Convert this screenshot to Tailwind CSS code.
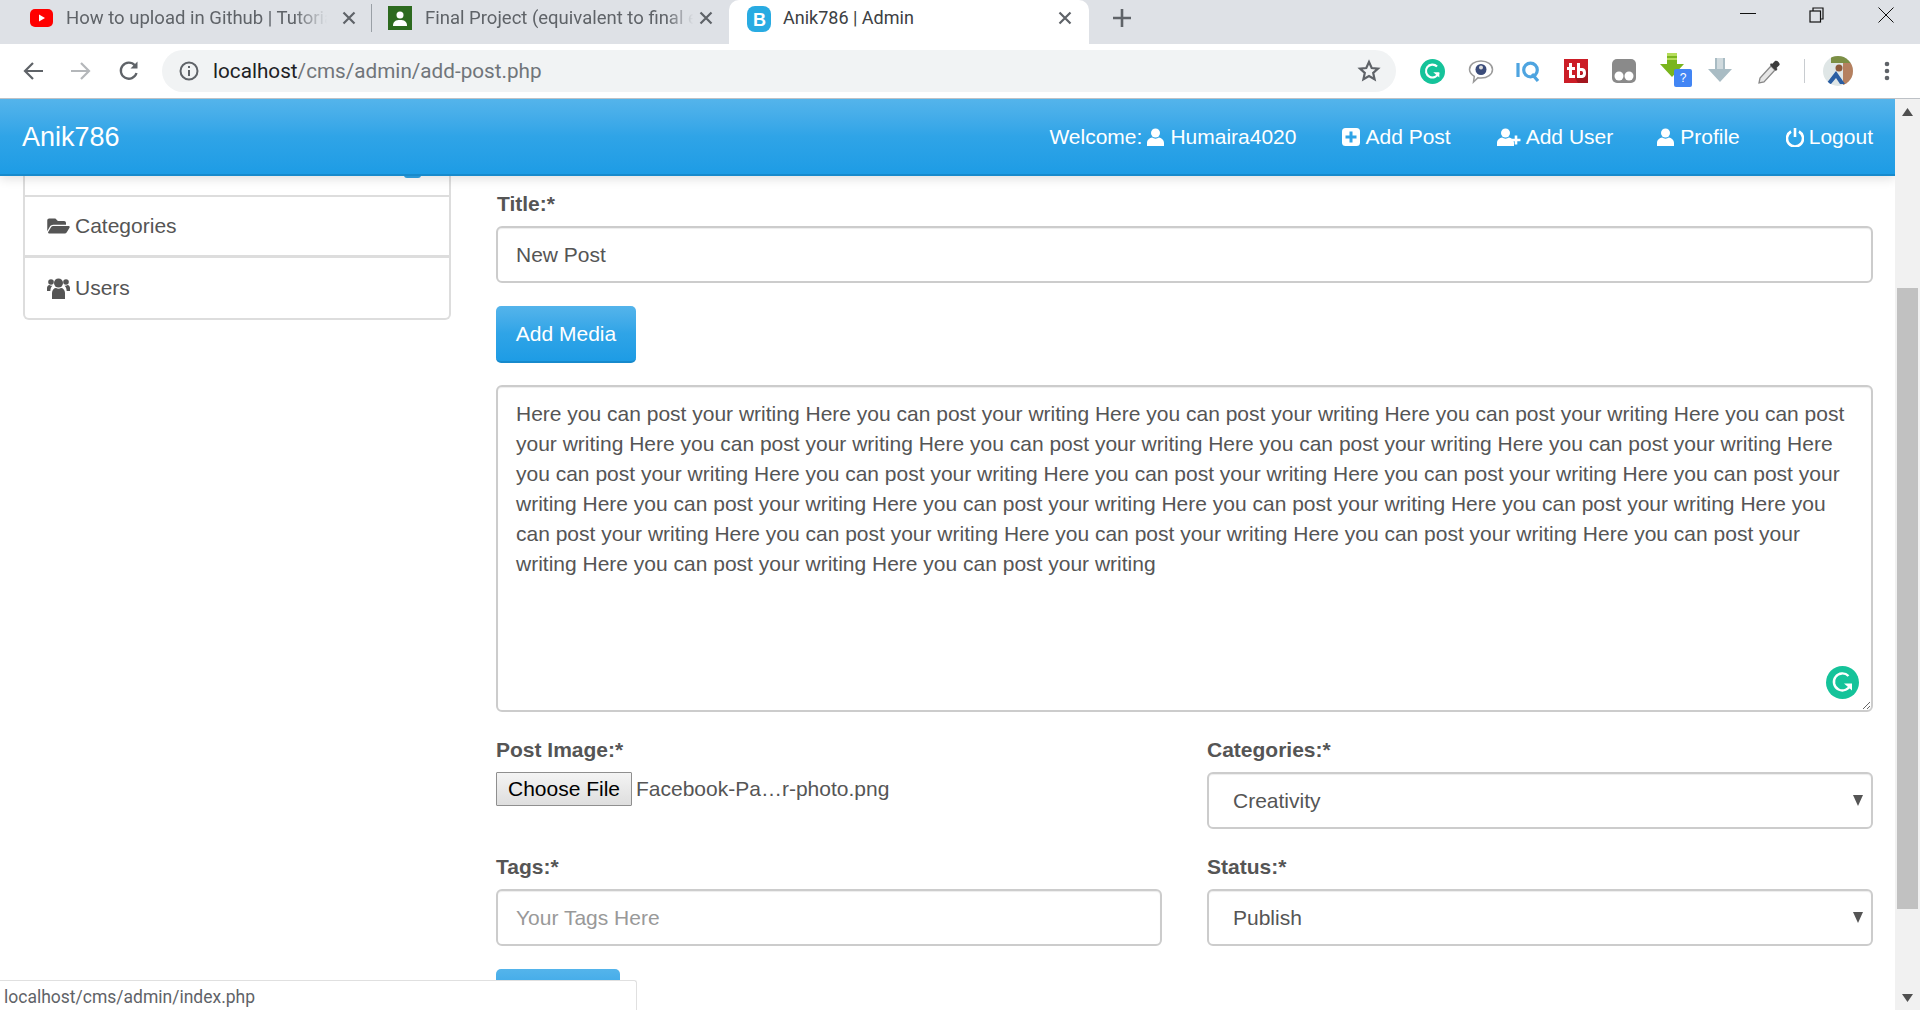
<!DOCTYPE html>
<html lang="en">
<head>
<meta charset="utf-8">
<title>Anik786 | Admin</title>
<script src="https://cdn.jsdelivr.net/npm/@tailwindcss/browser@4"></script>
</head>
<body class="w-[1920px] h-[1010px] overflow-hidden bg-white font-['Liberation_Sans',Arial,sans-serif] text-[#555] relative">

<!-- Tab strip -->
<div class="h-[44px] bg-[#dee1e6] flex items-start font-['Roboto',sans-serif] text-[18.5px] text-[#5f6368]">
  <div class="w-[371px] h-[36px] flex items-center pl-[30px] shrink-0">
    <svg class="w-[23px] h-[18px] shrink-0" viewBox="0 0 23 18"><rect width="23" height="18" rx="5" fill="#f00"/><path d="M9 5.5l6 3.500-6 3.500z" fill="#fff"/></svg>
    <span class="ml-[13px] pt-[2px] w-[272px] whitespace-nowrap [mask-image:linear-gradient(to_right,black_84%,transparent_96%)]">How to upload in Github | Tutoria</span>
    <svg class="w-[14px] h-[14px] ml-[4px] shrink-0" viewBox="0 0 14 14" stroke="#5f6368" stroke-width="2.2"><path d="M1.5 1.5l11 11M12.5 1.5l-11 11"/></svg>
  </div>
  <div class="w-px h-[28px] mt-[4px] bg-[#9aa0a6] shrink-0"></div>
  <div class="w-[357px] h-[36px] flex items-center pl-[16px] shrink-0">
    <svg class="w-[24px] h-[24px] shrink-0" viewBox="0 0 24 24"><rect width="24" height="24" fill="#2d6a1f"/><circle cx="12" cy="9" r="3.5" fill="#fff"/><path d="M5 20c0-5 3-6 7-6s7 1 7 6z" fill="#fff"/></svg>
    <span class="ml-[13px] pt-[2px] w-[274px] whitespace-nowrap [mask-image:linear-gradient(to_right,black_88%,transparent_98%)]">Final Project (equivalent to final e</span>
    <svg class="w-[14px] h-[14px] shrink-0" viewBox="0 0 14 14" stroke="#5f6368" stroke-width="2.2"><path d="M1.5 1.5l11 11M12.5 1.5l-11 11"/></svg>
  </div>
  <div class="w-[360px] h-[44px] bg-white rounded-t-[10px] flex items-start pl-[18px] pt-[6px] shrink-0 text-[18px] text-[#3c4043]">
    <svg class="w-[24px] h-[26px] shrink-0" viewBox="0 0 24 26"><rect width="24" height="26" rx="8" fill="#29abe2"/><text x="6" y="20" font-size="18" font-weight="700" fill="#fff" font-family="Liberation Sans">B</text></svg>
    <span class="ml-[12px] w-[268px] leading-[24px] whitespace-nowrap">Anik786 | Admin</span>
    <svg class="w-[14px] h-[14px] ml-[7px] mt-[5px] shrink-0" viewBox="0 0 14 14" stroke="#5f6368" stroke-width="2.2"><path d="M1.5 1.5l11 11M12.5 1.5l-11 11"/></svg>
  </div>
  <svg class="w-[20px] h-[20px] ml-[23px] mt-[8px] shrink-0" viewBox="0 0 20 20" stroke="#5f6368" stroke-width="2.6"><path d="M10 1v18M1 10h18"/></svg>
  <div class="flex-1"></div>
  <svg class="w-[16px] h-[16px] mt-[6px] mr-[53px]" viewBox="0 0 16 16" stroke="#111" stroke-width="1"><path d="M0 7.5h16"/></svg>
  <svg class="w-[15px] h-[16px] mt-[7px] mr-[54px]" viewBox="0 0 15 16" stroke="#111" stroke-width="1.2" fill="none"><rect x="1" y="4" width="10.5" height="11"/><path d="M4 4V1h10v11h-2.5"/></svg>
  <svg class="w-[16px] h-[16px] mt-[7px] mr-[26px]" viewBox="0 0 16 16" stroke="#111" stroke-width="1"><path d="M.5.5l15 15M15.5.5l-15 15"/></svg>
</div>

<!-- Toolbar -->
<div class="h-[55px] bg-white flex items-center border-b border-b-[#bdc1c6]">
  <svg class="w-[22px] h-[20px] ml-[22px] shrink-0" viewBox="0 0 22 20" fill="none" stroke="#5f6368" stroke-width="2.2"><path d="M21 10H3M11 2l-8 8 8 8"/></svg>
  <svg class="w-[22px] h-[20px] ml-[26px] shrink-0" viewBox="0 0 22 20" fill="none" stroke="#b4b7ba" stroke-width="2.2"><path d="M1 10h18M11 2l8 8-8 8"/></svg>
  <svg class="w-[22px] h-[22px] ml-[26px] shrink-0" viewBox="0 0 22 22" fill="none" stroke="#5f6368" stroke-width="2.3"><path d="M18.5 13a8 8 0 1 1-1.6-7.5"/><path d="M19.5 1.5v7h-7z" fill="#5f6368" stroke="none"/></svg>
  <div class="w-[1234px] h-[42px] ml-[22px] rounded-full bg-[#f1f3f4] flex items-center pl-[17px] shrink-0 relative">
    <svg class="w-[20px] h-[20px] shrink-0" viewBox="0 0 20 20" fill="none" stroke="#5f6368" stroke-width="2"><circle cx="10" cy="10" r="8.5"/><path d="M10 9v6M10 5v2"/></svg>
    <span class="ml-[14px] pt-[2px] font-['Roboto',sans-serif] text-[20.7px] text-[#70757a] whitespace-nowrap"><span class="text-[#202124]">localhost</span>/cms/admin/add-post.php</span>
    <svg class="w-[24px] h-[24px] ml-auto mr-[15px] shrink-0" viewBox="0 0 24 24" fill="none" stroke="#5f6368" stroke-width="2.2"><path d="M12 3l2.7 6 6.3.6-4.8 4.3 1.4 6.3L12 17l-5.6 3.2 1.4-6.3L3 9.6 9.3 9z"/></svg>
  </div>
  <!-- Grammarly -->
  <svg class="w-[25px] h-[25px] ml-[24px] shrink-0" viewBox="0 0 33 33"><circle cx="16.5" cy="16.5" r="16.5" fill="#15c39a"/><path d="M24.5 18.5a8.5 8.5 0 1 1-2-8.5" fill="none" stroke="#fff" stroke-width="2.8"/><path d="M17.5 17.5h8v7z" fill="#fff"/></svg>
  <!-- Speech -->
  <svg class="w-[26px] h-[26px] ml-[23px] shrink-0" viewBox="0 0 26 26"><path d="M13 3c6.500 0 11.500 3.500 11.500 8.500S19.500 20 13 20c-1 0-2 0-3-.3L5.500 24l.8-5.600C3.500 16.500 1.500 14.300 1.500 11.500 1.500 6.500 6.500 3 13 3z" fill="#fff" stroke="#9b9b9b" stroke-width="1.500"/><circle cx="13" cy="11.500" r="5.500" fill="#3b4c7a"/><circle cx="13" cy="9.500" r="2" fill="#ddd"/></svg>
  <!-- IQ -->
  <svg class="w-[24px] h-[22px] ml-[22px] shrink-0" viewBox="0 0 24 22" fill="none" stroke="#4ea4e0" stroke-width="3.200"><path d="M2 3v14"/><circle cx="14.500" cy="10" r="6.800"/><path d="M16 14l6 7"/></svg>
  <!-- tb -->
  <svg class="w-[24px] h-[24px] ml-[24px] shrink-0" viewBox="0 0 24 24"><rect width="24" height="24" fill="#cc1d27"/><path d="M11 19l13-9v14H14z" fill="#a3161e"/><path d="M5 4h3v4h3v3H8v5h3v3H5v-8H3V8h2zM13 4h3v5h2.500c2.300 0 3.500 2.200 3.500 5s-1.200 5-3.500 5H13zm3 8v4h1.500c.9 0 1.500-.8 1.500-2s-.6-2-1.500-2z" fill="#fff"/></svg>
  <!-- Tweetdeck grey -->
  <svg class="w-[24px] h-[24px] ml-[24px] shrink-0" viewBox="0 0 24 24"><rect width="24" height="24" rx="5" fill="#8a8a8a"/><circle cx="7" cy="17" r="4.500" fill="#fff"/><circle cx="17" cy="17" r="4.500" fill="#fff"/></svg>
  <!-- Green arrow + badge -->
  <div class="w-[32px] h-[36px] ml-[24px] relative shrink-0">
    <svg class="w-[24px] h-[26px]" viewBox="0 0 24 26"><path d="M7 0h10v11h7L12 24 0 11h7z" fill="#7ab51d"/><path d="M7 0h10v3H7zM7 5h10v2H7z" fill="#b5dc5a"/></svg>
    <div class="absolute right-0 bottom-[2px] w-[18px] h-[18px] rounded-[2px] bg-[#4285f4] text-white text-[12px] leading-[18px] text-center">?</div>
  </div>
  <!-- Grey arrow -->
  <svg class="w-[24px] h-[26px] ml-[16px] shrink-0" viewBox="0 0 24 26"><path d="M7 0h10v11h7L12 24 0 11h7z" fill="#a9bcc4"/><path d="M9 0h6v11H9z" fill="#d0dade"/></svg>
  <!-- Dropper -->
  <svg class="w-[24px] h-[26px] ml-[25px] shrink-0" viewBox="0 0 24 26"><path d="M14 8L3 20l-1 5 5-1L18 12z" fill="#e6e6e6" stroke="#888" stroke-width="1.300"/><path d="M13 7l6 6 1.500-2-1-1 3-3c1-1.500-2.500-5.500-4.500-4l-3 3-1-1z" fill="#3c3c3c"/></svg>
  <div class="w-px h-[24px] ml-[23px] bg-[#c8ccd0] shrink-0"></div>
  <svg class="w-[30px] h-[30px] ml-[18px] shrink-0" viewBox="0 0 30 30"><defs><clipPath id="av"><circle cx="15" cy="15" r="15"/></clipPath></defs><g clip-path="url(#av)"><rect width="30" height="30" fill="#dfe6e6"/><rect x="8" y="0" width="22" height="7" fill="#7c8f45"/><rect x="20" y="7" width="10" height="23" fill="#b5805f"/><path d="M3 28l10-13 9 13h-5l-4-6-5 6z" fill="#2a5ea3"/><circle cx="16" cy="12" r="3.500" fill="#8d5a3c"/></g></svg>
  <svg class="w-[6px] h-[20px] ml-[31px] shrink-0" viewBox="0 0 6 20" fill="#5f6368"><circle cx="3" cy="3" r="2.300"/><circle cx="3" cy="10" r="2.300"/><circle cx="3" cy="17" r="2.300"/></svg>
</div>

<!-- Viewport -->
<div class="flex h-[911px]">
  <div class="w-[1895px] h-[911px] overflow-hidden shrink-0 relative">
    <!-- Navbar -->
    <nav class="relative z-10 h-[77px] flex items-center bg-linear-to-b from-[#54b4eb] via-[#2fa4e7] to-[#1d9ce5] border-b-2 border-b-[#178acc] shadow-[0_3px_10px_rgba(0,0,0,0.12)] text-white text-[21px]">
      <a class="ml-[22px] text-[27px] leading-[36px]">Anik786</a>
      <div class="ml-auto flex items-center mr-[22px] leading-[30px]">
        <span class="flex items-center">Welcome:
          <svg class="w-[17px] h-[18px] ml-[5px] mr-[6px]" viewBox="0 0 17 18" fill="#fff"><circle cx="8.500" cy="5" r="4.500"/><path d="M0 18v-3c0-3.500 3-5 5-5.500 2 1.500 5 1.500 7 0 2 .5 5 2 5 5.500v3z"/></svg>Humaira4020</span>
        <span class="flex items-center ml-[46px]">
          <svg class="w-[18px] h-[18px] mr-[5px]" viewBox="0 0 18 18"><rect width="18" height="18" rx="3.500" fill="#fff"/><path d="M9 3.500v11M3.500 9h11" stroke="#2fa4e7" stroke-width="3"/></svg>Add Post</span>
        <span class="flex items-center ml-[46px]">
          <svg class="w-[25px] h-[18px] mr-[4px]" viewBox="0 0 25 18" fill="#fff"><circle cx="8.500" cy="5" r="4.500"/><path d="M0 18v-3c0-3.500 3-5 5-5.500 2 1.500 5 1.500 7 0 2 .5 5 2 5 5.500v3z"/><path d="M19 7.500v9M14.500 12h9" stroke="#fff" stroke-width="2.600"/></svg>Add User</span>
        <span class="flex items-center ml-[44px]">
          <svg class="w-[17px] h-[18px] mr-[6px]" viewBox="0 0 17 18" fill="#fff"><circle cx="8.500" cy="5" r="4.500"/><path d="M0 18v-3c0-3.500 3-5 5-5.500 2 1.500 5 1.500 7 0 2 .5 5 2 5 5.500v3z"/></svg>Profile</span>
        <span class="flex items-center ml-[46px]">
          <svg class="w-[18px] h-[20px] mr-[5px]" viewBox="0 0 18 20" fill="none" stroke="#fff" stroke-width="2.600"><path d="M5 4.500a8 8 0 1 0 8 0"/><path d="M9 1v9"/></svg>Logout</span>
      </div>
    </nav>

    <div class="flex items-start">
      <!-- Sidebar -->
      <aside class="ml-[23px] w-[428px] shrink-0 text-[21px] relative">
        <div class="absolute right-[30px] top-[-1px] w-[17px] h-[3px] rounded-b-full bg-[#2fa4e7]"></div>
        <div class="h-[21px] border-x-2 border-b-2 border-[#ddd]"></div>
        <a class="h-[61px] flex items-center pl-[22px] border-x-2 border-b-[3px] border-[#ddd]">
          <svg class="w-[23px] h-[20px] mr-[5px]" viewBox="0 0 576 512" fill="#555"><path d="M572.694 292.093L500.27 416.248A63.997 63.997 0 0 1 444.989 448H45.025c-18.523 0-30.064-20.093-20.731-36.093l72.424-124.155A64 64 0 0 1 152 256h399.964c18.523 0 30.064 20.093 20.73 36.093zM152 224h328v-48c0-26.51-21.49-48-48-48H272l-64-64H48C21.49 64 0 85.49 0 112v278.046l69.077-118.418C86.214 242.25 117.989 224 152 224z"/></svg>Categories</a>
        <a class="h-[62px] flex items-center pl-[22px] border-x-2 border-b-2 border-[#ddd] rounded-b-[6px]">
          <svg class="w-[23px] h-[22px] mr-[5px]" viewBox="0 0 23 22" fill="#555"><circle cx="11.500" cy="6" r="4.500"/><circle cx="4" cy="5" r="2.800"/><circle cx="19" cy="5" r="2.800"/><path d="M5 22v-6c0-3 2-5 4-5 1.500 1 3.500 1 5 0 2 0 4 2 4 5v6z"/><path d="M0 14v-3c0-1.500 1-3 2.500-3 1 .8 2.200.8 3 .5-1 1.200-2 2.500-2.200 5.500zM23 14v-3c0-1.500-1-3-2.500-3-1 .8-2.200.8-3 .5 1 1.200 2 2.500 2.200 5.500z"/></svg>Users</a>
      </aside>

      <!-- Form -->
      <main class="ml-[45px] w-[1377px] shrink-0 pt-[13px] text-[21px]">
        <label class="block pl-px font-bold leading-[30px]">Title:*</label>
        <input class="block mt-[7px] w-full h-[57px] px-[18px] border-2 border-[#ccc] rounded-[6px] shadow-[inset_0_1px_1px_rgba(0,0,0,0.075)] text-[#555] outline-none" value="New Post">
        <button class="block mt-[23px] w-[140px] h-[57px] rounded-[5px] bg-linear-to-b from-[#54b4eb] via-[#2fa4e7] to-[#1d9ce5] border-b-2 border-b-[#178acc] text-white">Add Media</button>
        <div class="relative mt-[22px] h-[327px]">
          <textarea class="block w-full h-full px-[18px] py-[12px] border-2 border-[#ccc] rounded-[6px] shadow-[inset_0_1px_1px_rgba(0,0,0,0.075)] text-[#555] leading-[30px] outline-none">Here you can post your writing Here you can post your writing Here you can post your writing Here you can post your writing Here you can post your writing Here you can post your writing Here you can post your writing Here you can post your writing Here you can post your writing Here you can post your writing Here you can post your writing Here you can post your writing Here you can post your writing Here you can post your writing Here you can post your writing Here you can post your writing Here you can post your writing Here you can post your writing Here you can post your writing Here you can post your writing Here you can post your writing Here you can post your writing Here you can post your writing Here you can post your writing Here you can post your writing</textarea>
          <svg class="absolute right-[14px] bottom-[13px] w-[33px] h-[33px]" viewBox="0 0 33 33"><circle cx="16.500" cy="16.500" r="16.500" fill="#15c39a"/><path d="M24.500 18.500a8.500 8.500 0 1 1-2-8.500" fill="none" stroke="#fff" stroke-width="2.400"/><path d="M18 17.500h8v7z" fill="#fff"/></svg>
        </div>

        <div class="mt-[23px] grid grid-cols-[666px_666px] gap-x-[45px]">
          <div>
            <label class="block font-bold leading-[30px]">Post Image:*</label>
            <div class="mt-[7px] h-[57px] flex items-start">
              <button class="w-[136px] h-[34px] border border-[#8f8f8f] rounded-[1px] bg-linear-to-b from-[#f4f4f4] to-[#dedede] text-black text-[21px] leading-[30px]">Choose File</button>
              <span class="ml-[4px] leading-[34px]">Facebook-Pa…r-photo.png</span>
            </div>
          </div>
          <div>
            <label class="block font-bold leading-[30px]">Categories:*</label>
            <div class="relative mt-[7px]">
              <select class="block appearance-none w-full h-[57px] pl-[24px] border-2 border-[#ccc] rounded-[6px] shadow-[inset_0_1px_1px_rgba(0,0,0,0.075)] text-[#555] outline-none bg-white"><option>Creativity</option></select>
              <svg class="absolute right-[10px] top-[23px] w-[10px] h-[11px]" viewBox="0 0 10 11" fill="#555"><path d="M0 0h10L5 11z"/></svg>
            </div>
          </div>
          <div class="mt-[23px]">
            <label class="block font-bold leading-[30px]">Tags:*</label>
            <input class="block mt-[7px] w-full h-[57px] px-[18px] border-2 border-[#ccc] rounded-[6px] shadow-[inset_0_1px_1px_rgba(0,0,0,0.075)] text-[#555] placeholder:text-[#999] outline-none" placeholder="Your Tags Here">
          </div>
          <div class="mt-[23px]">
            <label class="block font-bold leading-[30px]">Status:*</label>
            <div class="relative mt-[7px]">
              <select class="block appearance-none w-full h-[57px] pl-[24px] border-2 border-[#ccc] rounded-[6px] shadow-[inset_0_1px_1px_rgba(0,0,0,0.075)] text-[#555] outline-none bg-white"><option>Publish</option></select>
              <svg class="absolute right-[10px] top-[23px] w-[10px] h-[11px]" viewBox="0 0 10 11" fill="#555"><path d="M0 0h10L5 11z"/></svg>
            </div>
          </div>
        </div>
        <div class="mt-[23px] w-[124px] h-[57px] rounded-[5px] bg-linear-to-b from-[#54b4eb] via-[#2fa4e7] to-[#1d9ce5]"></div>
      </main>
    </div>
  </div>

  <!-- Scrollbar -->
  <div class="w-[25px] h-[911px] bg-[#f1f1f1] shrink-0 flex flex-col items-center">
    <svg class="w-[11px] h-[8px] mt-[9px] shrink-0" viewBox="0 0 11 8" fill="#505050"><path d="M5.500 0L11 8H0z"/></svg>
    <div class="w-[21px] h-[621px] mt-[172px] bg-[#c1c1c1] shrink-0"></div>
    <svg class="w-[11px] h-[8px] mt-[85px] shrink-0" viewBox="0 0 11 8" fill="#505050"><path d="M0 0h11L5.500 8z"/></svg>
  </div>
</div>

<!-- Status bubble -->
<div class="absolute left-0 bottom-0 z-20 w-[637px] h-[30px] overflow-hidden bg-white border-t border-r border-[#e0e0e0] rounded-tr-[3px] pl-[4px] font-['Roboto',sans-serif] text-[17.500px] leading-[33px] text-[#5f6368]">localhost/cms/admin/index.php</div>
</body>
</html>
